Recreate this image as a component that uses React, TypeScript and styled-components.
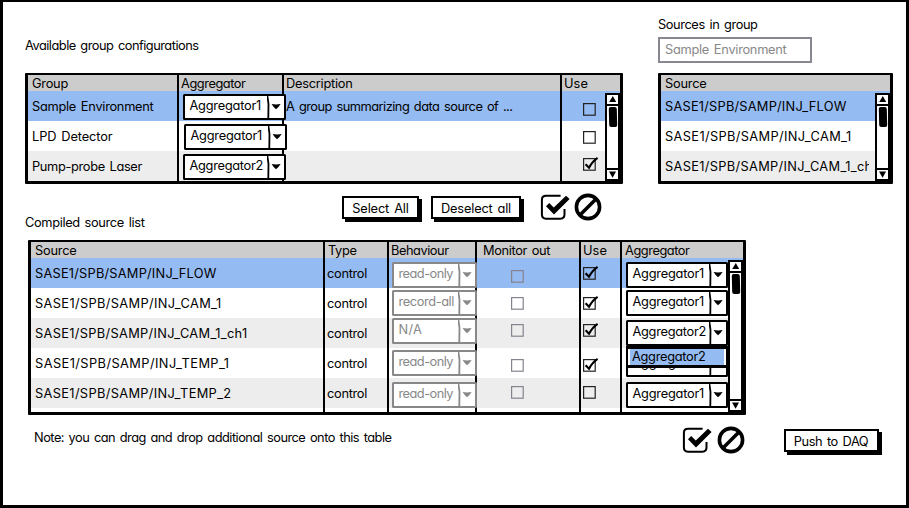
import React, { useLayoutEffect, useRef, useState } from "react";
import styled, { createGlobalStyle, css } from "styled-components";

const INK = "#000";
const MUTED = "#888";
const BLUE = "#94bbf2";
const GREY = "#ededed";
const HEAD = "#cccccc";

const GlobalStyle = createGlobalStyle`
  * { box-sizing: border-box; }
  html, body { margin: 0; padding: 0; background: #fff; }
  body {
    font-family: Inter, Lato, sans-serif;
    font-feature-settings: "cv11" 1;
    font-size: 12.8px;
    line-height: 18px;
    word-spacing: 1.5px;
    color: ${INK};
    overflow: hidden;
  }
`;

const Span = styled.span`
  display: block;
  width: max-content;
  flex: none;
  white-space: pre;
  height: 16px;
`;

/* Spreads or tightens the letters so that the text takes the given width. */
function Text({ w, children }: { w: number; children: string }) {
  const ref = useRef<HTMLSpanElement>(null);
  const [spacing, setSpacing] = useState(0);
  useLayoutEffect(() => {
    const el = ref.current;
    if (!el) return;
    const natural = el.getBoundingClientRect().width - spacing * children.length;
    setSpacing((w + 0.5 - natural) / children.length);
  }, [w, children]);
  return (
    <Span ref={ref} style={{ letterSpacing: `${spacing}px` }}>
      {children}
    </Span>
  );
}

const Window = styled.main`
  width: 909px;
  height: 508px;
  border: 3px solid ${INK};
  border-top-width: 2px;
  background: #fff;
  padding-left: 22px;
`;

const TopArea = styled.section`
  display: flex;
  gap: 35px;
  height: 182px;
`;

const Panel = styled.div<{ $w: number }>`
  width: ${(p) => p.$w}px;
  display: flex;
  flex-direction: column;
`;

const PanelHead = styled.div<{ $top: number }>`
  height: 71px;
  flex: none;
  padding-top: ${(p) => p.$top}px;
`;

const Input = styled.div`
  width: 154px;
  height: 26px;
  margin-top: 5px;
  border: 2px solid #8a8793;
  padding: 2px 0 0 5px;
  color: ${MUTED};
`;

const TableFrame = styled.div<{ $w: number; $h: number }>`
  position: relative;
  width: ${(p) => p.$w}px;
  height: ${(p) => p.$h}px;
  border: 3px solid ${INK};
  border-top-width: 2px;
  border-radius: 1px;
  display: flex;
  flex-direction: column;
`;

const Row = styled.div<{ $cols: string; $bg?: string; $h?: number }>`
  display: grid;
  grid-template-columns: ${(p) => p.$cols};
  grid-template-rows: 100%;
  height: ${(p) => p.$h ?? 30}px;
  flex: none;
  background: ${(p) => p.$bg ?? "#fff"};
`;

const Cell = styled.div<{ $left?: number; $top?: number; $last?: boolean; $clip?: boolean }>`
  min-width: 0;
  display: flex;
  align-items: flex-start;
  padding: ${(p) => p.$top ?? 7}px 0 0 ${(p) => p.$left ?? 4}px;
  border-right: ${(p) => (p.$last ? "0" : `2px solid ${INK}`)};
  ${(p) => p.$clip && css`overflow: hidden; margin-right: 21px;`}
`;

const SelectBox = styled.div<{ $w: number; $muted?: boolean }>`
  flex: none;
  width: ${(p) => p.$w}px;
  height: 26px;
  display: flex;
  background: #fff;
  color: ${(p) => (p.$muted ? MUTED : INK)};
  border: 2px solid currentColor;
  border-radius: 1.5px;
`;

const SelectText = styled.div`
  flex: 1;
  padding: 1px 0 0 4.5px;
  min-width: 0;
`;

const SelectArrow = styled.svg`
  flex: none;
  width: 17px;
  height: 22px;
`;

function Select({ label, w, width, muted }: { label: string; w: number; width: number; muted?: boolean }) {
  return (
    <SelectBox $w={width} $muted={muted}>
      <SelectText>
        <Text w={w}>{label}</Text>
      </SelectText>
      <SelectArrow viewBox="0 0 17 22">
        <path d="M0.4 0 L1.5 8 L1.3 22" fill="none" stroke="currentColor" strokeWidth="1.8" />
        <path d="M4.6 8 Q9 8.8 13.6 8 Q11.6 11.4 9 13.2 Q6.6 11.4 4.6 8Z" fill="currentColor" />
      </SelectArrow>
    </SelectBox>
  );
}

const CheckSvg = styled.svg`
  flex: none;
  width: 16px;
  height: 16px;
  margin-top: -2px;
`;

function Check({ on, muted }: { on?: boolean; muted?: boolean }) {
  return (
    <CheckSvg viewBox="0 0 16 16">
      <rect x="0.6" y="2.6" width="11.6" height="11.6" fill="none" stroke={muted ? "#85838d" : "#222"} strokeWidth="1.2" />
      {on && <path d="M2.6 8.2 L6 11.8 Q9.2 5.4 14.6 1.8" fill="none" stroke={INK} strokeWidth="2.1" />}
    </CheckSvg>
  );
}

const Bar = styled.div`
  position: absolute;
  top: 18px;
  right: 0;
  bottom: 0;
  width: 15px;
  border: 2px solid ${INK};
  background: #fff;
  display: flex;
  flex-direction: column;
`;

const BarButton = styled.svg`
  width: 11px;
  height: 9px;
  flex: none;
`;

const Track = styled.div`
  flex: 1;
  border: solid ${INK};
  border-width: 2px 0;
  padding: 1px 0 0 1.5px;
`;

const Thumb = styled.div`
  width: 8px;
  height: 20px;
  border-radius: 2px;
  background: ${INK};
  transform: skewX(1.5deg);
`;

function Scrollbar() {
  return (
    <Bar>
      <BarButton viewBox="0 0 11 9">
        <path d="M5.8 1 L9.2 7 H2.2Z" fill={INK} />
      </BarButton>
      <Track>
        <Thumb />
      </Track>
      <BarButton viewBox="0 0 11 9">
        <path d="M2 1.6 H9 L5.6 7.8Z" fill={INK} />
      </BarButton>
    </Bar>
  );
}

const Button = styled.button<{ $w: number }>`
  font: inherit;
  font-feature-settings: inherit;
  word-spacing: inherit;
  color: inherit;
  flex: none;
  width: ${(p) => p.$w}px;
  height: 23px;
  margin: 0;
  padding: 0;
  display: flex;
  justify-content: center;
  align-items: center;
  background: #fff;
  border: 2px solid ${INK};
  box-shadow: 3px 3px 0 ${INK};
`;

const IconPair = styled.div`
  display: flex;
  gap: 3.5px;
`;

const BigIcon = styled.svg<{ $w: number }>`
  width: ${(p) => p.$w}px;
  height: 28px;
`;

function ConfirmIcons() {
  return (
    <IconPair>
      <BigIcon $w={31} viewBox="0 0 31 28">
        <path
          d="M20.6 2.8 H6 Q1.9 2.8 1.9 6.9 V21.6 Q1.9 25.7 6 25.7 H20.4 Q24.5 25.7 24.5 21.6 V16"
          fill="none"
          stroke={INK}
          strokeWidth="2"
        />
        <path d="M6 13.2 L9.2 10 L13.8 14.4 L26 2.7 L29.6 6.1 L14 21.6Z" fill={INK} />
      </BigIcon>
      <BigIcon $w={28} viewBox="0 0 28 28">
        <circle cx="14" cy="14" r="11.6" fill="none" stroke={INK} strokeWidth="3.6" />
        <path d="M6 22 L22 6" stroke={INK} strokeWidth="3.6" />
      </BigIcon>
    </IconPair>
  );
}

const Actions = styled.div`
  display: flex;
  height: 56px;
  padding-top: 9px;
`;

const ListTitle = styled.div`
  width: 317px;
  padding-top: 21px;
`;

const ButtonSlot = styled.div<{ $right: number }>`
  padding-top: 3px;
  margin-right: ${(p) => p.$right}px;
`;

const SourceArea = styled.section`
  padding-left: 3px;
`;

const Footer = styled.footer`
  display: flex;
  padding: 11px 0 0 9px;
`;

const Note = styled.div`
  width: 648px;
  padding-top: 3px;
`;

const PushSlot = styled.div`
  padding: 3px 0 0 39px;
`;

const MenuAnchor = styled.div`
  position: relative;
`;

const Menu = styled.div`
  position: absolute;
  z-index: 2;
  top: 26px;
  left: 0;
  width: 102px;
  height: 22px;
  border: 2.5px solid ${INK};
  border-width: 3px 2px;
  background: #fff;
  padding: 0 2px;
`;

const MenuItem = styled.div`
  height: 16px;
  padding-left: 2px;
  line-height: 16px;
  background: ${BLUE};
`;

const groups = [
  { name: "Sample Environment", w: 121, agg: "Aggregator1", aw: 71, left: 4, top: 3, text: true, check: false, cy: 12 },
  { name: "LPD Detector", w: 80, agg: "Aggregator1", aw: 71, left: 5, top: 3, text: false, check: false, cy: 9.5 },
  { name: "Pump-probe Laser", w: 109.5, agg: "Aggregator2", aw: 73, left: 4, top: 3, text: false, check: true, cy: 6.5 },
];

const members = [
  { name: "SASE1/SPB/SAMP/INJ_FLOW", w: 181 },
  { name: "SASE1/SPB/SAMP/INJ_CAM_1", w: 186 },
  { name: "SASE1/SPB/SAMP/INJ_CAM_1_ch1", w: 212 },
];

const sources = [
  { name: "SASE1/SPB/SAMP/INJ_FLOW", w: 181, mode: "read-only", mw: 54, my: 4, oy: 12, use: true, uy: 9, agg: "Aggregator1", aw: 71, ay: 4 },
  { name: "SASE1/SPB/SAMP/INJ_CAM_1", w: 186, mode: "record-all", mw: 55, my: 2, oy: 9, use: true, uy: 9, agg: "Aggregator1", aw: 71, ay: 2 },
  { name: "SASE1/SPB/SAMP/INJ_CAM_1_ch1", w: 212, mode: "N/A", mw: 23, my: 0, oy: 6, use: true, uy: 6, agg: "Aggregator2", aw: 73, ay: 2 },
  { name: "SASE1/SPB/SAMP/INJ_TEMP_1", w: 194, mode: "read-only", mw: 54, my: 2, oy: 11, use: true, uy: 11, agg: "Aggregator1", aw: 71, ay: 3 },
  { name: "SASE1/SPB/SAMP/INJ_TEMP_2", w: 196, mode: "read-only", mw: 54, my: 4, oy: 8, use: false, uy: 8, agg: "Aggregator1", aw: 71, ay: 4 },
];

const shades = [BLUE, "#fff", GREY, "#fff", GREY];
const groupCols = "151px 105px 278px 1fr";
const sourceCols = "294px 64px 88px 104px 41px 1fr";

export default function App() {
  return (
    <>
      <GlobalStyle />
      <Window>
        <TopArea>
          <Panel $w={598}>
            <PanelHead $top={35}>
              <Text w={173}>Available group configurations</Text>
            </PanelHead>
            <TableFrame $w={598} $h={112}>
              <Row $cols={groupCols} $bg={HEAD} $h={16}>
                <Cell $top={0}><Text w={35.5}>Group</Text></Cell>
                <Cell $top={0} $left={2}><Text w={64}>Aggregator</Text></Cell>
                <Cell $top={0} $left={2}><Text w={66}>Description</Text></Cell>
                <Cell $top={0} $left={2} $last><Text w={23.5}>Use</Text></Cell>
              </Row>
              {groups.map((g, i) => (
                <Row key={g.name} $cols={groupCols} $bg={shades[i]}>
                  <Cell><Text w={g.w}>{g.name}</Text></Cell>
                  <Cell $left={g.left} $top={g.top}><Select label={g.agg} w={g.aw} width={103} /></Cell>
                  <Cell $left={2}>{g.text && <Text w={226}>A group summarizing data source of ...</Text>}</Cell>
                  <Cell $left={21} $top={g.cy} $last><Check on={g.check} /></Cell>
                </Row>
              ))}
              <Scrollbar />
            </TableFrame>
          </Panel>
          <Panel $w={235}>
            <PanelHead $top={14}>
              <Text w={99}>Sources in group</Text>
              <Input><Text w={121}>Sample Environment</Text></Input>
            </PanelHead>
            <TableFrame $w={235} $h={112}>
              <Row $cols="1fr" $bg={HEAD} $h={16}>
                <Cell $top={0} $last><Text w={41}>Source</Text></Cell>
              </Row>
              {members.map((m, i) => (
                <Row key={m.name} $cols="1fr" $bg={shades[i]}>
                  <Cell $last $clip><Text w={m.w}>{m.name}</Text></Cell>
                </Row>
              ))}
              <Scrollbar />
            </TableFrame>
          </Panel>
        </TopArea>

        <Actions>
          <ListTitle><Text w={119}>Compiled source list</Text></ListTitle>
          <ButtonSlot $right={12}><Button $w={77}><Text w={56}>Select All</Text></Button></ButtonSlot>
          <ButtonSlot $right={18.5}><Button $w={90}><Text w={69.5}>Deselect all</Text></Button></ButtonSlot>
          <ConfirmIcons />
        </Actions>

        <SourceArea>
          <TableFrame $w={718} $h={175}>
            <Row $cols={sourceCols} $bg={HEAD} $h={16}>
              <Cell $top={0}><Text w={41}>Source</Text></Cell>
              <Cell $top={0} $left={3}><Text w={28}>Type</Text></Cell>
              <Cell $top={0} $left={2}><Text w={57}>Behaviour</Text></Cell>
              <Cell $top={0} $left={6}><Text w={66.5}>Monitor out</Text></Cell>
              <Cell $top={0} $left={2}><Text w={23.5}>Use</Text></Cell>
              <Cell $top={0} $left={3} $last><Text w={64}>Aggregator</Text></Cell>
            </Row>
            {sources.map((s, i) => (
              <Row key={s.name} $cols={sourceCols} $bg={shades[i]}>
                <Cell><Text w={s.w}>{s.name}</Text></Cell>
                <Cell $left={2}><Text w={39.5}>control</Text></Cell>
                <Cell $left={3} $top={s.my}><Select label={s.mode} w={s.mw} width={85} muted /></Cell>
                <Cell $left={34} $top={s.oy}><Check muted /></Cell>
                <Cell $left={2} $top={s.uy}><Check on={s.use} /></Cell>
                <Cell $left={4} $top={s.ay} $last>
                  <MenuAnchor>
                    <Select label={s.agg} w={s.aw} width={102} />
                    {i === 2 && (
                      <Menu>
                        <MenuItem><Text w={73}>Aggregator2</Text></MenuItem>
                      </Menu>
                    )}
                  </MenuAnchor>
                </Cell>
              </Row>
            ))}
            <Row $cols={sourceCols} $h={4}>
              <Cell $top={0} /><Cell $top={0} /><Cell $top={0} /><Cell $top={0} /><Cell $top={0} /><Cell $top={0} $last />
            </Row>
            <Scrollbar />
          </TableFrame>
        </SourceArea>

        <Footer>
          <Note><Text w={357}>Note: you can drag and drop additional source onto this table</Text></Note>
          <ConfirmIcons />
          <PushSlot><Button $w={95}><Text w={74}>Push to DAQ</Text></Button></PushSlot>
        </Footer>
      </Window>
    </>
  );
}
